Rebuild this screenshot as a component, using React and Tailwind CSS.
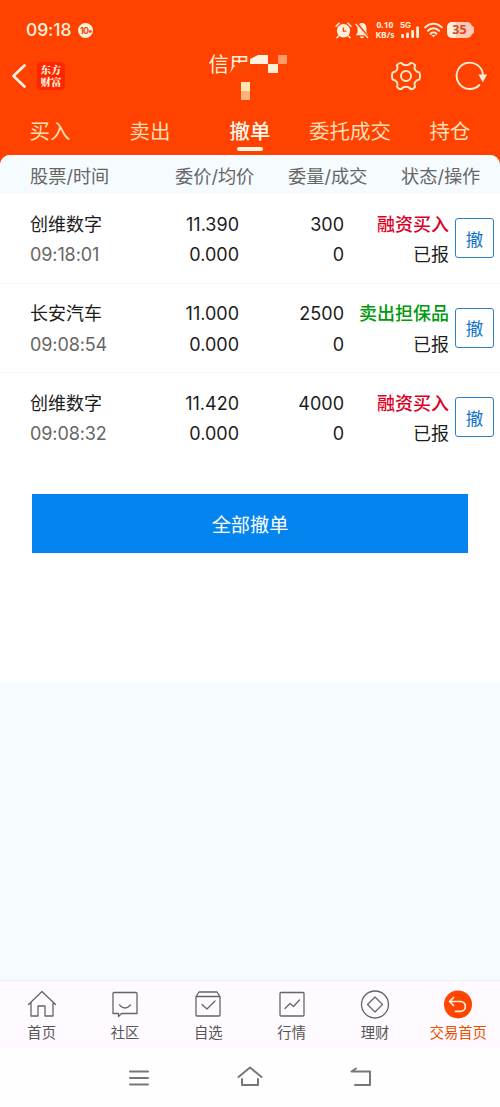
import { useState } from 'react';
import clsx from 'clsx';

const TABS = ['买入', '卖出', '撤单', '委托成交', '持仓'];

const ORDERS = [
    { id: 1, name: '创维数字', time: '09:18:01', price: '11.390', avg: '0.000', qty: '300', filled: '0', side: '融资买入', type: 'buy', status: '已报' },
    { id: 2, name: '长安汽车', time: '09:08:54', price: '11.000', avg: '0.000', qty: '2500', filled: '0', side: '卖出担保品', type: 'sell', status: '已报' },
    { id: 3, name: '创维数字', time: '09:08:32', price: '11.420', avg: '0.000', qty: '4000', filled: '0', side: '融资买入', type: 'buy', status: '已报' },
];

function StatusBar() {
    return (
        <div className="flex h-[60px] items-center pl-[26px] pr-[26px] text-[#fff0dc]">
            <span className="text-[17.5px] font-medium leading-none tracking-[-0.1px]">09:18</span>
            <span className="ml-[7px] flex h-[15px] w-[15px] items-center justify-center rounded-full bg-[#fff0dc] text-[9px] font-bold leading-none tracking-[-0.8px] text-[#f04a10]">
                10•
            </span>
            <div className="ml-auto flex items-center">
                {/* Alarm */}
                <svg width="17" height="17" viewBox="0 0 17 17" fill="none">
                    <circle cx="8.5" cy="8.8" r="6.7" fill="currentColor" />
                    <path d="M1 4.2 4 1.3M16 4.2 13 1.3M3.6 14 2 15.8M13.4 14l1.6 1.8" stroke="currentColor" strokeWidth="1.5" strokeLinecap="round" />
                    <path d="M8.3 5.4V9.2h3" stroke="#ff4200" strokeWidth="1.3" />
                </svg>
                {/* Muted bell */}
                <svg className="ml-[3px]" width="14" height="17" viewBox="0 0 14 17" fill="none">
                    <path d="M7 1C4 1 2.6 3.4 2.6 6v4.5L.8 13.3h12.4l-1.8-2.8V6C11.4 3.4 10 1 7 1Z" fill="currentColor" />
                    <path d="M5 14.6h4c0 2.2-4 2.2-4 0Z" fill="currentColor" />
                    <path d="M1.5 1 13.5 16" stroke="#ff4200" strokeWidth="2.6" />
                    <path d="M.7 2 13 16" stroke="currentColor" strokeWidth="1.3" />
                </svg>
                <p className="ml-[6px] w-[20px] text-center font-['Noto_Sans',sans-serif] text-[8.5px] font-bold leading-[10px]">
                    0.10<br />KB/s
                </p>
                <svg className="ml-[5px]" width="21" height="18" viewBox="0 0 21 18" fill="currentColor">
                    <text x="0" y="7" fontSize="8" fontWeight="700">5G</text>
                    <rect x="1.2" y="13" width="2.8" height="4" rx="1" />
                    <rect x="6.2" y="11.5" width="2.8" height="5.5" rx="1" />
                    <rect x="11.2" y="9" width="2.8" height="8" rx="1" />
                    <rect x="16.2" y="5.5" width="2.8" height="11.5" rx="1" />
                </svg>
                <svg className="ml-[3px]" width="19" height="16" viewBox="0 0 19 16" fill="none" stroke="currentColor" strokeWidth="2" strokeLinecap="round">
                    <path d="M1.2 5.4c4.6-4.9 12-4.9 16.6 0M4 8.7c3-3.2 8-3.2 11 0M6.6 11.7c1.6-1.6 4.2-1.6 5.8 0" />
                    <path d="M7.4 13h4.2l-2.1 2.2Z" fill="currentColor" stroke="none" />
                </svg>
                <div className="ml-[4px] flex h-[16px] w-[25px] items-center justify-center rounded-[5px] bg-linear-to-r from-[#fff0dc] from-35% to-[#ffcbb8] to-35% font-['Noto_Sans',sans-serif] text-[12.5px] font-bold leading-none text-[#d94a1c]">
                    35
                </div>
                <div className="h-[8px] w-[2px] rounded-r-full bg-[#ffcbb8]" />
            </div>
        </div>
    );
}

function TitleBar() {
    return (
        <div className="flex h-[50px] items-center pl-[11px] pr-[13px]">
            <svg className="-mt-[18px]" width="16" height="26" viewBox="0 0 16 26" fill="none">
                <path d="M13.5 2.5 2.5 13l11 10.5" stroke="#fff4e4" strokeWidth="2.7" strokeLinecap="round" strokeLinejoin="round" />
            </svg>
            <div className="-mt-[18px] ml-[10px] flex h-[28px] w-[28px] items-center justify-center rounded-[5px] bg-[#ff2500]">
                <p className="w-[22px] break-all text-center font-['Noto_Serif_CJK_SC','Noto_Sans_CJK_SC',serif] text-[10.5px] font-black leading-[12.5px] text-[#fff0dc]">
                    东方财富
                </p>
            </div>
            {/* Account name, masked */}
            <svg className="-mt-[20px] ml-[144px]" width="81" height="52" viewBox="0 0 81 52">
                <text x="-0.5" y="23" fontSize="20.5" fill="#fff0dc">信用</text>
                <path d="M20 25 26 17 30 14h11v12H20Z" fill="#ff4200" />
                <path d="M26 15l9-2h6v11H26Z" fill="#fa4800" />
                <path d="M41 10l8-4h10v9H41Z" fill="#fff2e2" />
                <path d="M59 15h10v9H59Z" fill="#fff0d5" />
                <path d="M69 6h9v9h-9Z" fill="#ff9a68" />
                <path d="M32 33h9v9h-9Z" fill="#ffe6b5" />
                <path d="M32 42h9v9h-9Z" fill="#ffb27a" />
            </svg>
            <svg className="-mt-[18px] ml-auto" width="30" height="30" viewBox="0 0 30 30" fill="none" stroke="#ffe9c8" strokeWidth="1.9" strokeLinejoin="round">
                <path d="M10.5 1.9C12 5 18 5 19.5 1.9Q22 1.5 24.1 4.2C22.5 8 24.5 11 28.4 11.5Q29.6 15 28.4 18.5C24.5 19 22.5 22 24.1 25.8Q22 28.5 19.5 28.1C18 25 12 25 10.5 28.1Q8 28.5 5.9 25.8C7.5 22 5.5 19 1.6 18.5Q.4 15 1.6 11.5C5.5 11 7.5 8 5.9 4.2Q8 1.5 10.5 1.9Z" />
                <circle cx="15" cy="15" r="5" />
            </svg>
            <svg className="-mt-[18px] ml-[34px]" width="32" height="30" viewBox="0 0 32 30" fill="none">
                <path d="M28 14A13.2 13.2 0 1 0 24.3 24" stroke="#fff0dc" strokeWidth="1.8" strokeLinecap="round" />
                <path d="M23.5 13.5H32L27.8 21.5Z" fill="#fff0dc" />
            </svg>
        </div>
    );
}

function OrderRow({ order }) {
    return (
        <div className="grid h-[89.5px] grid-cols-[120px_89px_105px_105px_39px] items-center border-b border-[#f5f7f8] pl-[30px] text-[18px] leading-[30.5px] text-[#1c1c1c] last:border-transparent">
            <div className="pt-[4px]">
                <p>{order.name}</p>
                <p className="tracking-[-0.1px] text-[#666]">{order.time}</p>
            </div>
            <div className="pt-[4px] text-right">
                <p>{order.price}</p>
                <p>{order.avg}</p>
            </div>
            <div className="pt-[4px] text-right">
                <p>{order.qty}</p>
                <p>{order.filled}</p>
            </div>
            <div className="pt-[4px] text-right">
                <p className={clsx('font-medium', order.type === 'buy' ? 'text-[#dc001f]' : 'text-[#009a0c]')}>{order.side}</p>
                <p>{order.status}</p>
            </div>
            <button className="ml-[6px] h-[40px] w-[39px] rounded-[3px] border-[1.5px] border-[#2a80cc] pt-[2px] text-[17.5px] leading-none text-[#0f72c8]">
                撤
            </button>
        </div>
    );
}

const NAV = [
    {
        label: '首页',
        icon: <path d="M1.5 14.5 15 1.5l13.5 13M4 12.5V26h7V16h7v10h8V12.5" />,
    },
    {
        label: '社区',
        icon: <path d="M4 2.5h22q1 0 1 1v20H11.5L8.5 26.5v-3H3v-20q0-1 1-1ZM9.5 15q5.5 6 11 0" />,
    },
    {
        label: '自选',
        icon: <path d="M3 6.5h24v18.5q0 1-1 1H4q-1 0-1-1ZM3 6.5 6 2h18l3 4.5M9 14.5l5 4.5 8-8" />,
    },
    {
        label: '行情',
        icon: <path d="M4 2.5h22q1 0 1 1v21.5q0 1-1 1H4q-1 0-1-1V3.5q0-1 1-1ZM8 18.5l5-5 3.5 3L22.5 10" />,
    },
    {
        label: '理财',
        icon: <path d="M15 1a13.5 13.5 0 1 0 0 27 13.5 13.5 0 0 0 0-27ZM15 7l7.5 7.5L15 22l-7.5-7.5Z" />,
    },
    {
        label: '交易首页',
        active: true,
        icon: (
            <>
                <circle cx="15" cy="14.5" r="14" fill="#ff4500" stroke="none" />
                <path d="M10.5 7.5 6.5 11.5l4 4M6.5 11.5H17.5a4.9 4.9 0 0 1 0 9.8h-5" stroke="#fff0dc" strokeWidth="1.7" />
            </>
        ),
    },
];

function BottomNav() {
    return (
        <nav className="grid h-[68px] grid-cols-6 border-t border-[#eef2f5] bg-[#fffaff]">
            {NAV.map(item => (
                <div key={item.label} className="flex flex-col items-center pt-[9px]">
                    <svg width="30" height="29" viewBox="0 0 30 29" fill="none" stroke="#666" strokeWidth="1.3" strokeLinejoin="round" strokeLinecap="round">
                        {item.icon}
                    </svg>
                    <span className={clsx('mt-[4px] whitespace-nowrap text-[14.3px] leading-[20px]', item.active ? 'text-[#e85000]' : 'text-[#555]')}>
                        {item.label}
                    </span>
                </div>
            ))}
        </nav>
    );
}

function SystemNav() {
    return (
        <div className="flex h-[59px] items-center justify-center gap-[85px] bg-[#fefefe]">
            <svg width="26" height="26" viewBox="0 0 26 26" fill="none" stroke="#777" strokeWidth="2" strokeLinecap="round">
                <path d="M4 6.5h18M4 13h18M4 19.5h18" />
            </svg>
            <svg width="26" height="26" viewBox="0 0 26 26" fill="none" stroke="#777" strokeWidth="2" strokeLinecap="round" strokeLinejoin="round">
                <path d="M1.5 12 13 2.5l11.5 9.5M5 14v6h16v-6" />
            </svg>
            <svg width="26" height="26" viewBox="0 0 26 26" fill="none" stroke="#777" strokeWidth="2" strokeLinecap="round" strokeLinejoin="round">
                <path d="M8 3.5 3.5 6.5H22V20H7" />
            </svg>
        </div>
    );
}

export default function App() {
    const [activeTab, setActiveTab] = useState('撤单');

    return (
        <div className="flex h-[1107px] w-[500px] flex-col overflow-hidden bg-[#f6fbff] font-['Inter','Noto_Sans_CJK_SC',sans-serif]">
            <header className="h-[165px] shrink-0 bg-[#ff4200]">
                <StatusBar />
                <TitleBar />
                <div className="grid h-[45px] grid-cols-5">
                    {TABS.map(tab => (
                        <button
                            key={tab}
                            onClick={() => setActiveTab(tab)}
                            className={clsx(
                                'flex flex-col items-center whitespace-nowrap pt-[7px] text-[20.5px] leading-[30px]',
                                activeTab === tab ? 'font-medium text-[#fff8ec]' : 'text-[#ffddb5]'
                            )}
                        >
                            {tab}
                            {activeTab === tab && <span className="h-[4px] w-[26px] rounded-full bg-[#fff5e8]" />}
                        </button>
                    ))}
                </div>
            </header>

            <main className="-mt-[10px] h-[528px] shrink-0 overflow-hidden rounded-t-[10px] bg-white">
                <div className="grid h-[39px] grid-cols-[145px_113px_113px_99px] items-center bg-[#f5fbff] pl-[30px] pt-[3px] text-[18.2px] leading-none text-[#666]">
                    <span>股票/时间</span>
                    <span>委价/均价</span>
                    <span>委量/成交</span>
                    <span>状态/操作</span>
                </div>
                <div>
                    {ORDERS.map(order => <OrderRow key={order.id} order={order} />)}
                </div>
                <button className="mx-[32px] mt-[31px] h-[59px] w-[436px] bg-[#0484ee] pt-[4px] text-[19.2px] text-white">
                    全部撤单
                </button>
            </main>

            <div className="mt-auto">
                <BottomNav />
                <SystemNav />
            </div>
        </div>
    );
}
